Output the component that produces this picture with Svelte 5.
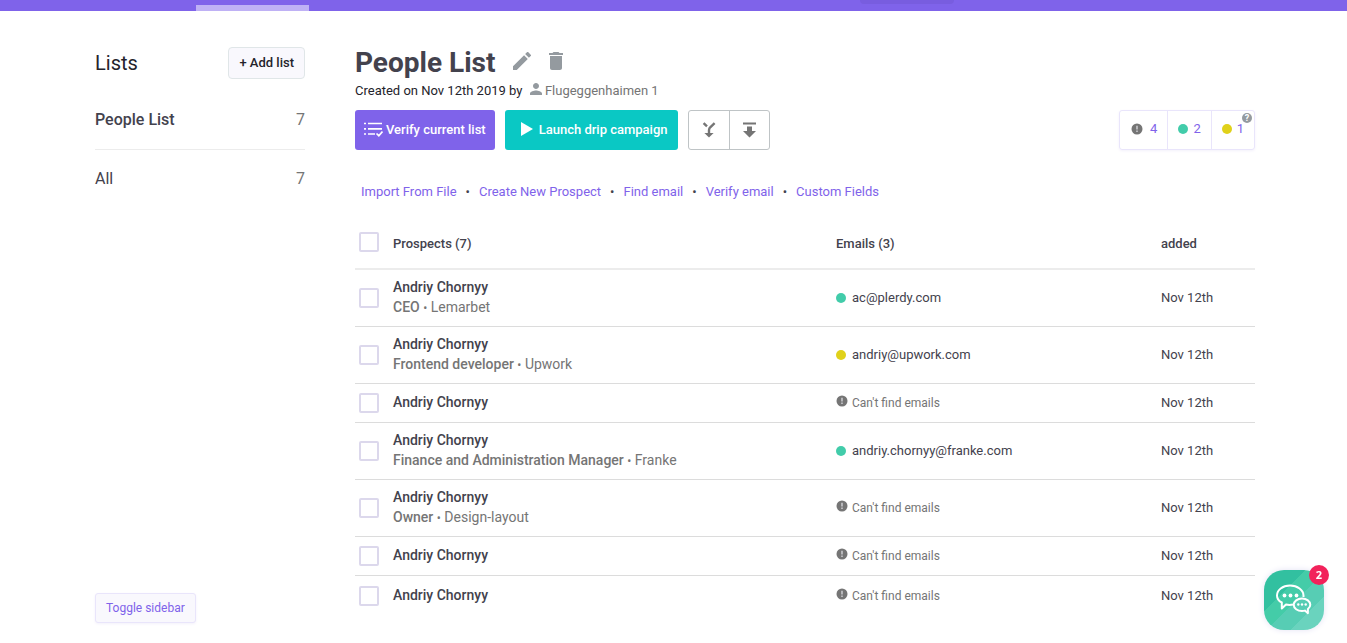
<script lang="ts">
  interface Prospect {
    id: number;
    name: string;
    position?: string;
    company?: string;
    email?: string;
    status?: string;
    added: string;
  }

  const lists = [
    { name: "People List", count: 7, active: true },
    { name: "All", count: 7, active: false },
  ];

  const actions: string[] = [
    "Import From File",
    "Create New Prospect",
    "Find email",
    "Verify email",
    "Custom Fields",
  ];

  const prospects: Prospect[] = [
    { id: 1, name: "Andriy Chornyy", position: "CEO", company: "Lemarbet", email: "ac@plerdy.com", status: "valid", added: "Nov 12th" },
    { id: 2, name: "Andriy Chornyy", position: "Frontend developer", company: "Upwork", email: "andriy@upwork.com", status: "risky", added: "Nov 12th" },
    { id: 3, name: "Andriy Chornyy", added: "Nov 12th" },
    { id: 4, name: "Andriy Chornyy", position: "Finance and Administration Manager", company: "Franke", email: "andriy.chornyy@franke.com", status: "valid", added: "Nov 12th" },
    { id: 5, name: "Andriy Chornyy", position: "Owner", company: "Design-layout", added: "Nov 12th" },
    { id: 6, name: "Andriy Chornyy", added: "Nov 12th" },
    { id: 7, name: "Andriy Chornyy", added: "Nov 12th" },
  ];

  const emailCount = prospects.filter((p) => p.email).length;

  let selected: number[] = $state([]);
  let showLists: boolean = $state(true);

  const toggleAll = () => {
    selected = selected.length === prospects.length ? [] : prospects.map((p) => p.id);
  };
</script>

{#snippet alertIcon()}
  <svg width="12" height="12" viewBox="0 0 12 12" aria-hidden="true">
    <circle cx="6" cy="6" r="5.5" fill="#757575" />
    <path d="M5.2 2.8h1.6v3.8H5.2zM5.2 7.6h1.6v1.5H5.2z" fill="#c9c9cc" />
  </svg>
{/snippet}

<header class="topbar">
  <a class="tab" href="#prospects" aria-label="Prospects"></a>
  <div class="pill"></div>
</header>

<div class="page">
  <aside class="sidebar">
    <div class="sidebar-head">
      <h2>Lists</h2>
      <button class="add-list">+ Add list</button>
    </div>
    {#if showLists}
      <nav>
        {#each lists as list}
          <a class="list-link" class:active={list.active} href="#list">
            <span>{list.name}</span>
            <span class="count">{list.count}</span>
          </a>
        {/each}
      </nav>
    {/if}
    <button class="toggle" onclick={() => (showLists = !showLists)}>Toggle sidebar</button>
  </aside>

  <main>
    <div class="title">
      <h1>People List</h1>
      <button class="icon-button" aria-label="Rename list">
        <svg width="18" height="18" viewBox="3 3 18 18" fill="#949a9f">
          <path d="M3 17.25V21h3.75L17.81 9.94l-3.75-3.75L3 17.25zM20.71 7.04a1 1 0 0 0 0-1.41l-2.34-2.34a1 1 0 0 0-1.41 0l-1.83 1.83 3.75 3.75 1.83-1.83z" />
        </svg>
      </button>
      <button class="icon-button" aria-label="Delete list">
        <svg width="14" height="18" viewBox="5 3 14 18" fill="#949a9f">
          <path d="M6 19c0 1.1.9 2 2 2h8c1.1 0 2-.9 2-2V7H6v12zM19 4h-3.5l-1-1h-5l-1 1H5v2h14V4z" />
        </svg>
      </button>
    </div>

    <p class="created">
      Created on Nov 12th 2019 by
      <span class="owner">
        <svg width="12" height="12" viewBox="4 4 16 16" fill="#949a9f" aria-hidden="true">
          <path d="M12 12c2.21 0 4-1.79 4-4s-1.79-4-4-4-4 1.79-4 4 1.79 4 4 4zm0 2c-2.67 0-8 1.34-8 4v2h16v-2c0-2.66-5.33-4-8-4z" />
        </svg>
        Flugeggenhaimen 1
      </span>
    </p>

    <div class="toolbar">
      <button class="primary verify">
        <svg width="19" height="15" viewBox="0 0 19 15" fill="none" stroke="#fff" stroke-width="1.7" aria-hidden="true">
          <path d="M0 1.500h2M4 1.500h14M0 6.800h2M4 6.800h14M0 12h2M4 12h7" />
          <path d="M12.500 11.500l2.300 2.200L18.500 9.500" />
        </svg>
        Verify current list
      </button>
      <button class="primary launch">
        <svg width="13" height="14" viewBox="0 0 13 14" fill="#fff" aria-hidden="true">
          <path d="M1 0l12 7-12 7z" />
        </svg>
        Launch drip campaign
      </button>
      <div class="group">
        <button aria-label="Merge">
          <svg width="14" height="16" viewBox="0 0 14 16" fill="none" stroke="#757575" stroke-width="2.4">
            <path d="M1.600 1.200l3.400 3.200M12.600 1.200L8.800 4.800Q7 6.200 7 8v4" />
            <path d="M2.400 11h9.200L7 15.600z" fill="#757575" stroke="none" />
          </svg>
        </button>
        <button aria-label="Export">
          <svg width="13" height="16" viewBox="0 0 13 16" fill="#757575">
            <path d="M0 .5h13v2H0zM4 4.500h5V9h4l-6.500 6.500L0 9h4z" />
          </svg>
        </button>
      </div>
      <div class="stats">
        <a href="#invalid">{@render alertIcon()}4</a>
        <a href="#valid"><span class="dot valid"></span>2</a>
        <a href="#risky"><span class="dot risky"></span>1</a>
        <span class="help">?</span>
      </div>
    </div>

    <nav class="actions">
      {#each actions as action, i}
        {#if i > 0}<span>•</span>{/if}
        <a href="#action">{action}</a>
      {/each}
    </nav>

    <table>
      <thead>
        <tr>
          <th class="check">
            <input type="checkbox" aria-label="Select all" checked={selected.length === prospects.length} onchange={toggleAll} />
          </th>
          <th>Prospects ({prospects.length})</th>
          <th class="email">Emails ({emailCount})</th>
          <th class="added">added</th>
        </tr>
      </thead>
      <tbody>
        {#each prospects as prospect}
          <tr>
            <td class="check">
              <input type="checkbox" aria-label="Select {prospect.name}" value={prospect.id} bind:group={selected} />
            </td>
            <td class="person">
              <strong>{prospect.name}</strong>
              {#if prospect.position}
                <div class="job"><b>{prospect.position}</b> <small>•</small> {prospect.company}</div>
              {/if}
            </td>
            <td>
              {#if prospect.email}
                <div class="mail"><span class="dot {prospect.status}"></span>{prospect.email}</div>
              {:else}
                <div class="mail missing">{@render alertIcon()}<span>Can't find emails</span></div>
              {/if}
            </td>
            <td>{prospect.added}</td>
          </tr>
        {/each}
      </tbody>
    </table>
  </main>
</div>

<button class="chat" aria-label="Open chat">
  <svg width="36" height="32" viewBox="0 0 36 32" fill="none" stroke="#fff" stroke-width="2" stroke-linejoin="round" aria-hidden="true">
    <path d="M17 20.500c-2 .5-5 .5-7 0L5.800 24.500V18.500C2.800 17 1 14.500 1 11.500 1 6 6.500 1.500 14 1.500S27.500 6 27.500 11.500v1.500" />
    <path d="M26 14.500c-4.600 0-8.300 2.800-8.300 6.300s3.700 6.200 8.300 6.200c1 0 2-.1 2.900-.4l3 2.600v-4.200c1.500-1.100 2.400-2.500 2.400-4.200 0-3.500-3.700-6.300-8.300-6.300z" />
    <g fill="#fff" stroke="none">
      <circle cx="8.500" cy="11.500" r="1.900" />
      <circle cx="14.500" cy="11.500" r="1.900" />
      <circle cx="20.500" cy="11.500" r="1.900" />
      <circle cx="22.300" cy="20.500" r="1.200" />
      <circle cx="26" cy="20.500" r="1.200" />
      <circle cx="29.700" cy="20.500" r="1.200" />
    </g>
  </svg>
  <span class="unread">2</span>
</button>

<style>
  :global(body) {
    margin: 0;
    background: #fff;
    color: #43424d;
    font-family: Roboto, "Liberation Sans", sans-serif;
    font-size: 13px;
    line-height: 20px;
  }

  a {
    color: #7f63ea;
    text-decoration: none;
  }

  button {
    display: flex;
    align-items: center;
    justify-content: center;
    padding: 0;
    border: none;
    background: none;
    font-family: inherit;
    font-size: 13px;
    cursor: pointer;
  }

  h1,
  h2,
  p {
    margin: 0;
  }

  .topbar {
    display: flex;
    justify-content: space-between;
    height: 11px;
    padding: 0 393px 0 196px;
    background: #7f63ea;
  }

  .tab {
    align-self: flex-end;
    width: 113px;
    height: 6px;
    background: #bfb1f5;
  }

  .pill {
    width: 94px;
    height: 4px;
    border-radius: 0 0 6px 6px;
    background: #785ddf;
  }

  .page {
    display: grid;
    grid-template-columns: 210px 1fr;
    gap: 50px;
    box-sizing: border-box;
    min-height: calc(100vh - 11px);
    padding: 36px 92px 20px 95px;
  }

  .sidebar {
    display: flex;
    flex-direction: column;
  }

  .sidebar-head {
    display: flex;
    align-items: center;
    justify-content: space-between;
    margin-bottom: 11px;
  }

  h2 {
    color: #24232b;
    font-size: 20px;
    font-weight: 400;
  }

  .add-list {
    box-sizing: border-box;
    height: 32px;
    padding: 0 10px 2px;
    border: 1px solid #e0e6e8;
    border-radius: 4px;
    background: #f9f8fd;
    color: #24232b;
    font-weight: 500;
  }

  .list-link {
    display: flex;
    justify-content: space-between;
    padding: 19px 0;
    color: #43424d;
    font-size: 16px;
  }

  .list-link + .list-link {
    border-top: 1px solid #ececec;
  }

  .list-link.active {
    padding-top: 20px;
    font-weight: 500;
  }

  .count {
    color: #757575;
    font-weight: 400;
  }

  .toggle {
    align-self: flex-start;
    height: 30px;
    margin-top: auto;
    padding: 0 10px;
    border: 1px solid #e9e5fb;
    border-radius: 3px;
    background: #f9f8fd;
    box-shadow: 0 1px 3px #f3f1fb;
    color: #7f63ea;
    font-size: 12px;
  }

  .title {
    display: flex;
    align-items: center;
    height: 32px;
    gap: 18px;
  }

  .icon-button {
    padding-bottom: 4px;
  }

  h1 {
    font-size: 28px;
    font-weight: 700;
  }

  .created {
    margin-bottom: 9px;
    padding-top: 2px;
    color: #24232b;
  }

  .owner {
    margin-left: 4px;
    color: #757575;
  }

  .toolbar {
    display: flex;
    gap: 10px;
  }

  .primary {
    height: 40px;
    padding: 0 9px 2px;
    gap: 3px;
    border-radius: 3px;
    color: #fff;
    font-weight: 500;
  }

  .verify {
    background: #7f63ea;
  }

  .launch {
    gap: 6px;
    padding-right: 10px;
    padding-left: 15px;
    background: #0ac8c4;
  }

  .group {
    display: flex;
    border: 1px solid #bfc4c6;
    border-radius: 3px;
  }

  .group button {
    width: 40px;
  }

  .group button + button {
    border-left: 1px solid #bfc4c6;
  }

  .stats {
    display: flex;
    position: relative;
    box-sizing: border-box;
    height: 40px;
    margin-left: auto;
    border: 1px solid #e9e5fb;
    border-radius: 3px;
    box-shadow: 0 1px 3px #f3f1fb;
  }

  .stats a {
    display: flex;
    align-items: center;
    padding: 0 10px 2px 11px;
    gap: 7px;
  }

  .stats a + a {
    padding-left: 10px;
    gap: 5px;
    border-left: 1px solid #e9e5fb;
  }

  .help {
    position: absolute;
    top: 2px;
    right: 2px;
    width: 10px;
    height: 10px;
    border-radius: 5px;
    background: #949a9f;
    color: #fff;
    font-size: 9px;
    font-weight: 700;
    line-height: 10px;
    text-align: center;
  }

  .dot {
    flex: none;
    width: 10px;
    height: 10px;
    border-radius: 5px;
  }

  .valid {
    background: #42ccaa;
  }

  .risky {
    background: #e0d11a;
  }

  .actions {
    display: flex;
    gap: 9px;
    padding: 32px 6px 14px;
  }

  table {
    width: 100%;
    border-collapse: separate;
    border-spacing: 0;
    table-layout: fixed;
  }

  th,
  td {
    box-sizing: border-box;
    height: 39px;
    padding: 8px 0;
    border-bottom: 1px solid #dcdcdc;
    text-align: left;
  }

  th {
    height: 54px;
    padding: 10px 0 6px;
    border-bottom: 2px solid #ececec;
    font-weight: 500;
  }

  tbody tr:last-child td {
    border-bottom: none;
  }

  .check {
    width: 38px;
    padding: 8px 4px;
  }

  .email {
    width: 325px;
  }

  .added {
    width: 94px;
  }

  input {
    display: block;
    box-sizing: border-box;
    width: 20px;
    height: 20px;
    margin: 0;
    border: 2px solid #dcd8ec;
    border-radius: 2px;
    appearance: none;
  }

  input:checked {
    background: #7f63ea;
  }

  .person {
    padding: 7px 0 9px;
    font-size: 14px;
  }

  strong {
    display: block;
  }

  strong,
  b {
    font-weight: 500;
  }

  .job {
    color: #757575;
  }

  small {
    font-size: 12px;
    line-height: 12px;
  }

  .mail {
    display: flex;
    align-items: center;
    gap: 6px;
  }

  .missing {
    gap: 4px;
    color: #757575;
    font-size: 12px;
  }

  .missing svg {
    padding-bottom: 4px;
  }

  .chat {
    position: fixed;
    right: 23px;
    bottom: 13px;
    width: 60px;
    height: 60px;
    border-radius: 20px;
    background: linear-gradient(135deg, #32c0a0 0 35%, #44cca8 35% 52%, #57cdb4 52% 72%, #6ad3be 72%);
    box-shadow: 0 0 6px #e4e2f4;
  }

  .unread {
    position: absolute;
    top: -5px;
    right: -5px;
    width: 20px;
    height: 20px;
    border-radius: 10px;
    background: #f2225b;
    color: #fff;
    font-family: "Open Sans", sans-serif;
    font-size: 11px;
    font-weight: 700;
    line-height: 20px;
  }
</style>
